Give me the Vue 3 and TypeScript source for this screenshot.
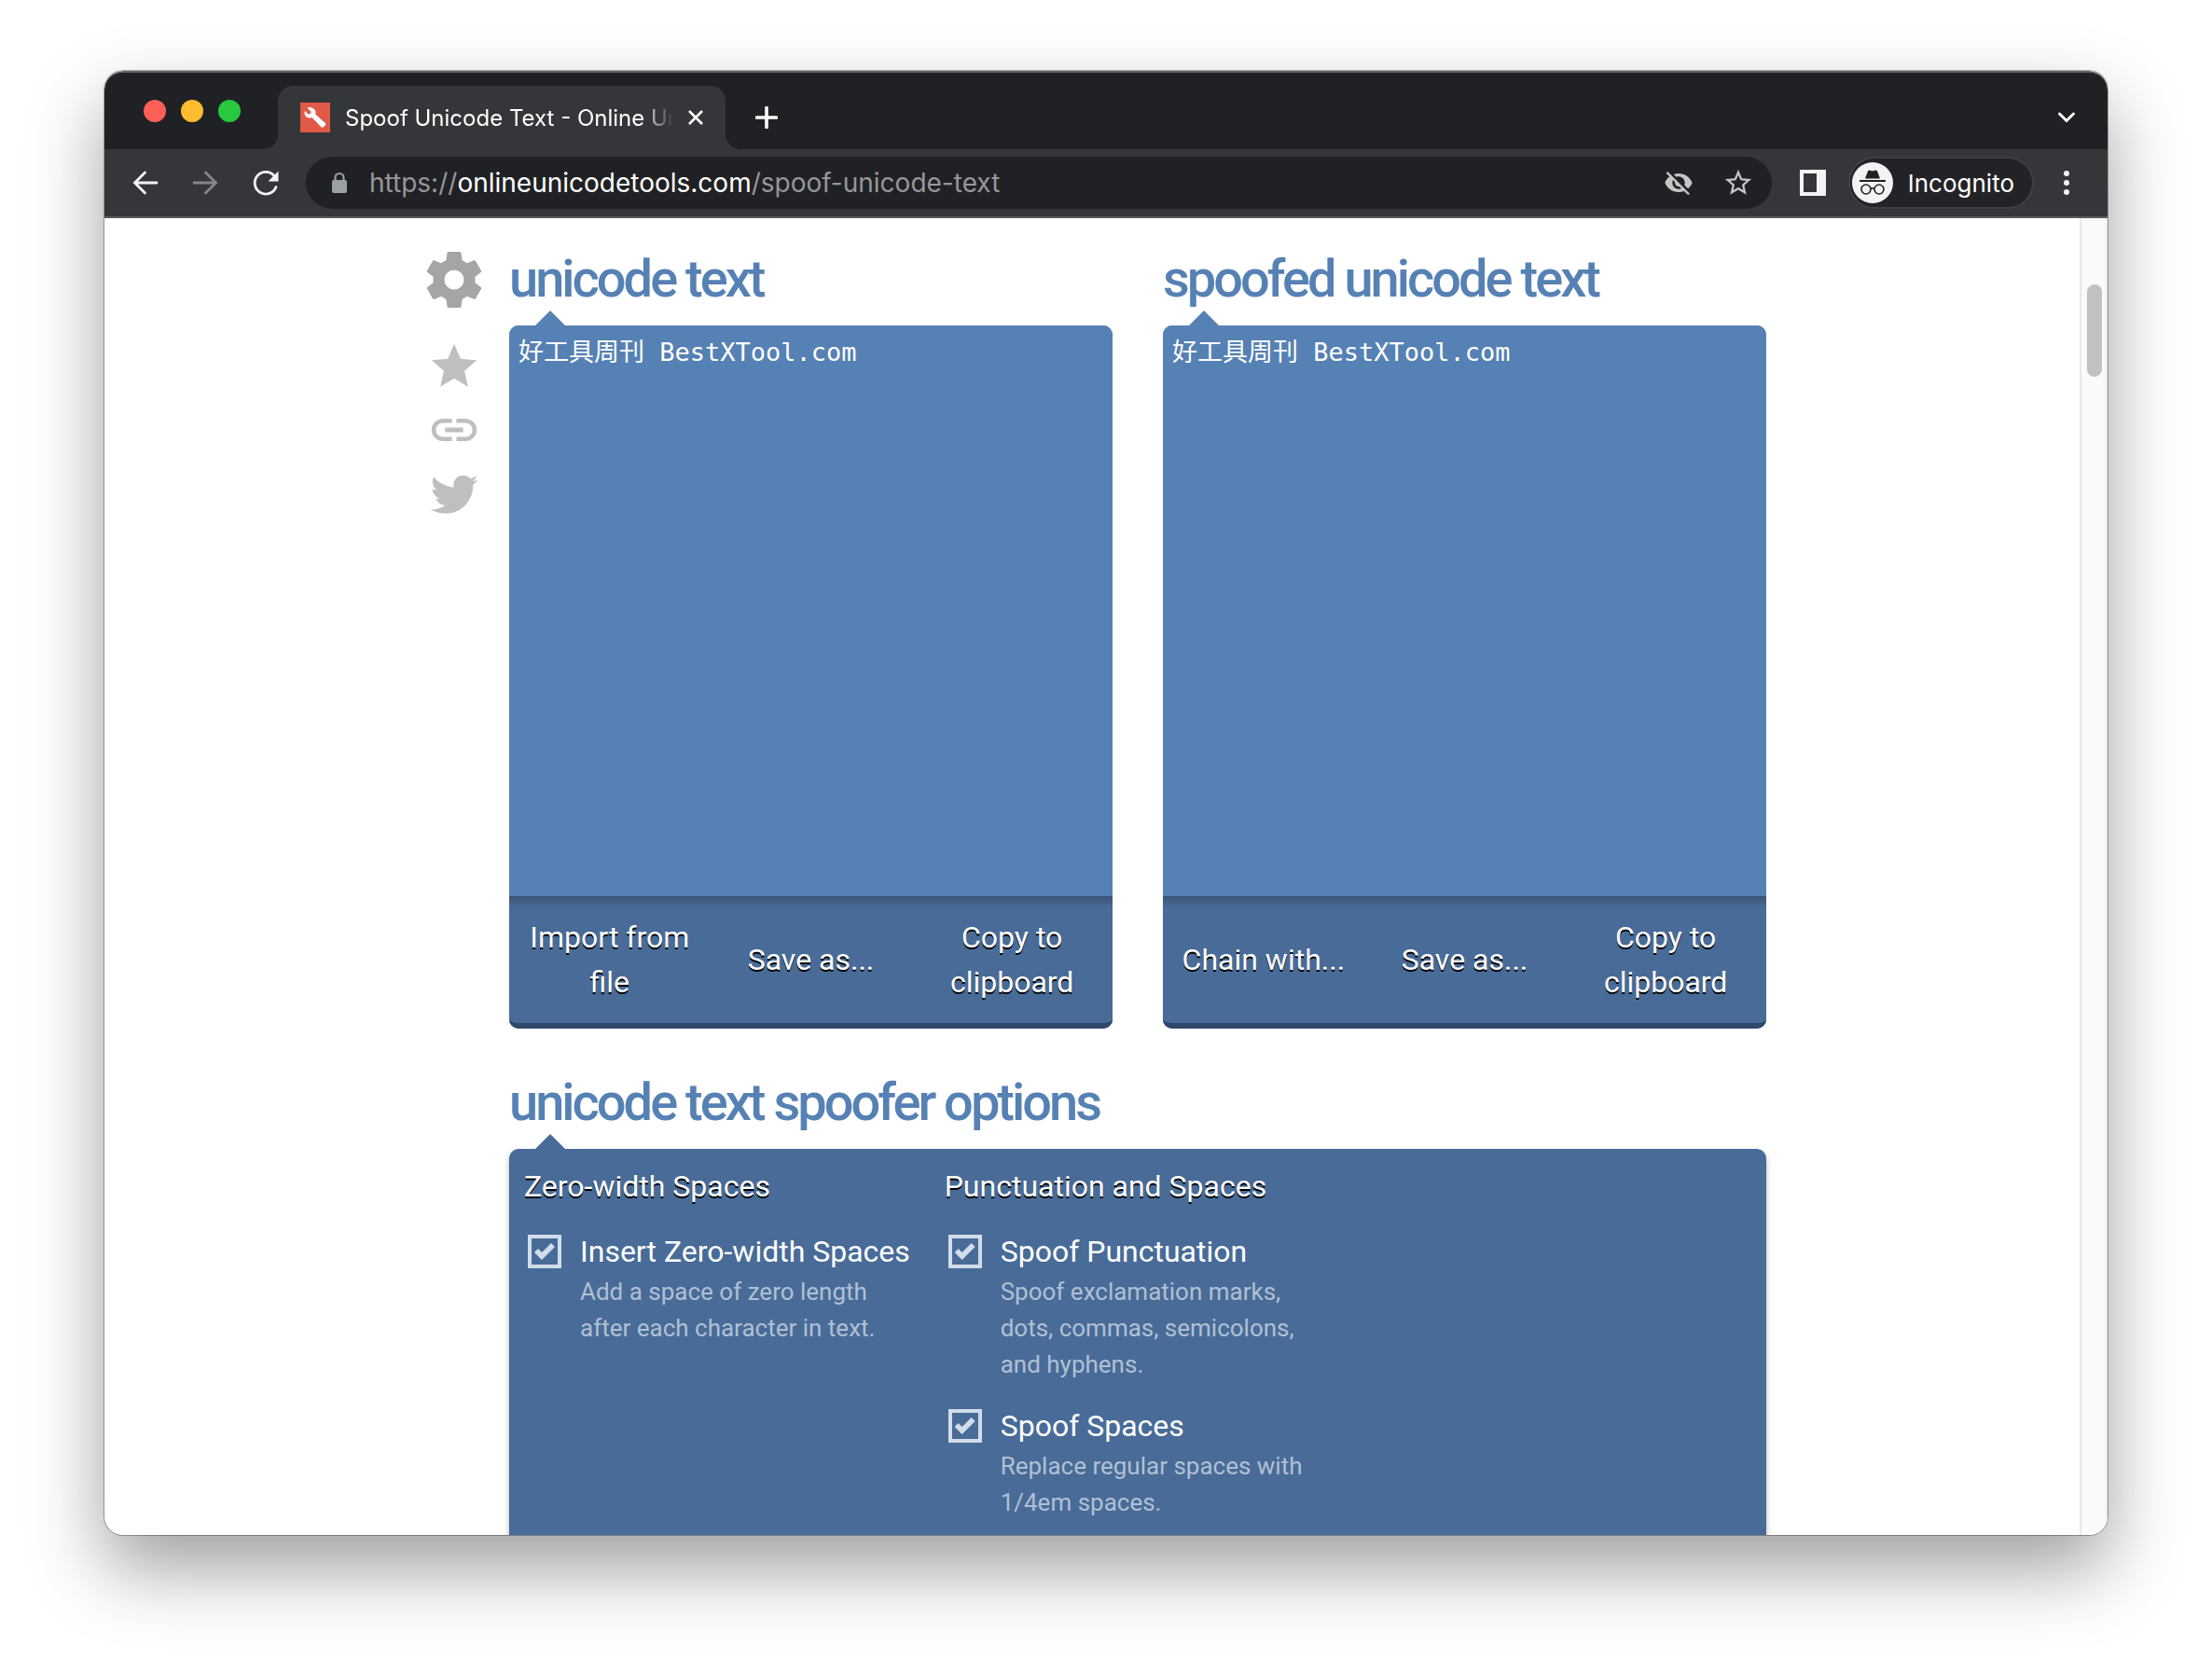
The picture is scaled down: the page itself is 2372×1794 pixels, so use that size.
<script setup lang="ts">
import { reactive, ref } from 'vue'

interface Option {
  id: string
  label: string
  hint: string
  checked: boolean
}
interface OptionGroup {
  title: string
  options: Option[]
}
interface ToolPanel {
  id: string
  title: string
  text: string
  actions: string[]
}

const panels = reactive<ToolPanel[]>([
  {
    id: 'input',
    title: 'unicode text',
    text: '好工具周刊 BestXTool.com',
    actions: ['Import from file', 'Save as...', 'Copy to clipboard'],
  },
  {
    id: 'output',
    title: 'spoofed unicode text',
    text: '好工具周刊 BestXTool.com',
    actions: ['Chain with...', 'Save as...', 'Copy to clipboard'],
  },
])

const groups = reactive<OptionGroup[]>([
  {
    title: 'Zero-width Spaces',
    options: [
      {
        id: 'zero-width',
        label: 'Insert Zero-width Spaces',
        hint: 'Add a space of zero length after each character in text.',
        checked: true,
      },
    ],
  },
  {
    title: 'Punctuation and Spaces',
    options: [
      {
        id: 'punctuation',
        label: 'Spoof Punctuation',
        hint: 'Spoof exclamation marks, dots, commas, semicolons, and hyphens.',
        checked: true,
      },
      {
        id: 'spaces',
        label: 'Spoof Spaces',
        hint: 'Replace regular spaces with 1/4em spaces.',
        checked: true,
      },
    ],
  },
])

const shareIcons = [
  {
    name: 'Favorite',
    d: 'M12,17.27L18.18,21L16.54,13.97L22,9.24L14.81,8.62L12,2L9.19,8.62L2,9.24L7.45,13.97L5.82,21L12,17.27Z',
  },
  {
    name: 'Copy link',
    d: 'M3.9,12C3.9,10.29 5.29,8.9 7,8.9H11V7H7A5,5 0 0,0 2,12A5,5 0 0,0 7,17H11V15.1H7C5.29,15.1 3.9,13.71 3.9,12M8,13H16V11H8V13M17,7H13V8.9H17C18.71,8.9 20.1,10.29 20.1,12C20.1,13.71 18.71,15.1 17,15.1H13V17H17A5,5 0 0,0 22,12A5,5 0 0,0 17,7Z',
  },
  {
    name: 'Share on Twitter',
    d: 'M22.46,6C21.69,6.35 20.86,6.58 20,6.69C20.88,6.16 21.56,5.32 21.88,4.31C21.05,4.81 20.13,5.16 19.16,5.36C18.37,4.5 17.26,4 16,4C13.65,4 11.73,5.92 11.73,8.29C11.73,8.63 11.77,8.96 11.84,9.27C8.28,9.09 5.11,7.38 3,4.79C2.63,5.42 2.42,6.16 2.42,6.94C2.42,8.43 3.17,9.75 4.33,10.5C3.62,10.5 2.96,10.3 2.38,10C2.38,10 2.38,10 2.38,10.03C2.38,12.11 3.86,13.85 5.82,14.24C5.46,14.34 5.08,14.39 4.69,14.39C4.42,14.39 4.15,14.36 3.89,14.31C4.43,16 6,17.26 7.89,17.29C6.43,18.45 4.58,19.13 2.56,19.13C2.22,19.13 1.88,19.11 1.54,19.07C3.44,20.29 5.7,21 8.12,21C16,21 20.33,14.46 20.33,8.79C20.33,8.6 20.33,8.42 20.32,8.23C21.16,7.63 21.88,6.87 22.46,6Z',
  },
]

const tabTitle = ref('Spoof Unicode Text - Online Unicode Tools')
</script>

<template>
  <div class="desktop">
    <div class="window">
      <header class="tab-strip">
        <div class="lights">
          <button class="light red" aria-label="Close window"></button>
          <button class="light amber" aria-label="Minimize window"></button>
          <button class="light green" aria-label="Zoom window"></button>
        </div>
        <div class="tab">
          <svg class="favicon" viewBox="0 0 32 32" aria-hidden="true">
            <rect width="32" height="32" fill="#e05a47" />
            <path d="M12 5.500C9.500 4.600 8 5.200 7.600 5.700L12 10.200L9.200 13L4.900 8.900C3.600 12 5.600 16 9.500 16.400C11 16.600 12 16.200 12.600 15.900L22.400 26.300C24 27.900 28.600 23.800 26.900 22L16.200 12.600C17.400 9.700 15.600 6.500 12 5.500Z" fill="#fff" />
          </svg>
          <span class="tab-title">{{ tabTitle }}</span>
          <button class="tab-close" aria-label="Close tab">
            <svg viewBox="0 0 16 16" width="16" height="16"><path d="M1 1L15 15M15 1L1 15" stroke="#fff" stroke-width="2.600" /></svg>
          </button>
        </div>
        <button class="new-tab" aria-label="New tab">
          <svg viewBox="0 0 24 24" width="24" height="24"><path d="M12 1.500V22.500M1.500 12H22.500" stroke="#fff" stroke-width="3.600" stroke-linecap="round" /></svg>
        </button>
        <button class="tab-search" aria-label="Search tabs">
          <svg viewBox="0 0 20 14" width="20" height="14"><path d="M2.500 3L10 10.500L17.500 3" fill="none" stroke="#fff" stroke-width="3" stroke-linecap="round" /></svg>
        </button>
      </header>

      <nav class="toolbar">
        <button class="nav-button" aria-label="Back">
          <svg viewBox="0 0 32 32" width="32" height="32"><path d="M28 16H5M15.500 5L4.500 16L15.500 27" fill="none" stroke="#f1f3f4" stroke-width="2.800" stroke-linecap="round" /></svg>
        </button>
        <button class="nav-button" aria-label="Forward">
          <svg viewBox="0 0 32 32" width="32" height="32"><path d="M4 16H27M16.500 5L27.500 16L16.500 27" fill="none" stroke="#868789" stroke-width="2.800" stroke-linecap="round" /></svg>
        </button>
        <button class="nav-button" aria-label="Reload">
          <svg viewBox="-1 0 32 32" width="32" height="32"><path d="M27 20.500A11.800 11.800 0 1 1 24.500 8" fill="none" stroke="#f1f3f4" stroke-width="2.800" stroke-linecap="round" /><path d="M29.500 3.500V14.500H18.500Z" fill="#f1f3f4" /></svg>
        </button>
        <div class="address">
          <svg class="lock" viewBox="0 0 18 24" width="18" height="24"><path d="M4.500 10V6.500a4.500 4.500 0 0 1 9 0V10" fill="none" stroke="#9aa0a6" stroke-width="2.200" /><rect x="1" y="9" width="16" height="14" rx="2" fill="#9aa0a6" /></svg>
          <div class="url" role="textbox" aria-label="Address" contenteditable="true">https://<span class="host">onlineunicodetools.com</span>/spoof-unicode-text</div>
          <button class="address-button" aria-label="Third-party cookies blocked">
            <svg viewBox="0 0 24 24" width="32" height="32"><path fill="#c4c5c7" d="M12 7c2.760 0 5 2.240 5 5 0 .650-.130 1.260-.360 1.830l2.920 2.920c1.510-1.260 2.700-2.890 3.430-4.750-1.730-4.390-6-7.500-11-7.500-1.400 0-2.740.250-3.980.700l2.160 2.160C10.740 7.130 11.350 7 12 7zM2 4.270l2.280 2.280.460.460C3.080 8.300 1.780 10.020 1 12c1.730 4.390 6 7.500 11 7.500 1.550 0 3.030-.300 4.380-.840l.420.420L19.730 22 21 20.730 3.270 3 2 4.270zM7.530 9.800l1.550 1.550c-.050.210-.080.430-.080.650 0 1.660 1.340 3 3 3 .220 0 .440-.030.650-.080l1.550 1.550c-.670.330-1.410.530-2.200.530-2.760 0-5-2.240-5-5 0-.790.200-1.530.530-2.200z" /></svg>
          </button>
          <button class="address-button" aria-label="Bookmark this tab">
            <svg viewBox="0 0 24 24" width="34" height="34"><path fill="#c4c5c7" d="M22 9.240l-7.190-.620L12 2 9.190 8.630 2 9.240l5.460 4.730L5.820 21 12 17.270 18.180 21l-1.630-7.030L22 9.240zM12 15.400l-3.760 2.270 1-4.280-3.320-2.880 4.380-.380L12 6.100l1.710 4.040 4.380.380-3.320 2.880 1 4.280L12 15.400z" /></svg>
          </button>
        </div>
        <button class="side-panel" aria-label="Side panel">
          <svg viewBox="0 0 28 28" width="28" height="28"><path fill="#f1f3f4" fill-rule="evenodd" d="M0 0H28V28H0ZM4 4V24H18V4Z" /></svg>
        </button>
        <button class="incognito">
          <svg viewBox="0 0 44 44" width="44" height="44" aria-hidden="true">
            <circle cx="22" cy="22" r="22" fill="#f1f3f4" />
            <path d="M14 17.500L17 9.500C17.400 8.500 18.500 8.300 19.500 8.800C21 9.500 23 9.500 24.500 8.800C25.500 8.300 26.600 8.500 27 9.500L30 17.500Z" fill="#202124" />
            <path d="M8 20H36" stroke="#202124" stroke-width="2" />
            <g fill="none" stroke="#202124" stroke-width="1.600"><circle cx="15" cy="29" r="5" /><circle cx="29" cy="29" r="5" /><path d="M20 28.500Q22 27 24 28.500" /></g>
          </svg>
          <span>Incognito</span>
        </button>
        <button class="menu" aria-label="Menu">
          <svg viewBox="0 0 8 28" width="8" height="28" fill="#f1f3f4"><circle cx="4" cy="4" r="3" /><circle cx="4" cy="14" r="3" /><circle cx="4" cy="24" r="3" /></svg>
        </button>
      </nav>

      <div class="viewport">
        <main class="page">
          <aside class="side-icons">
            <button class="icon-button gear" aria-label="Settings">
              <svg viewBox="0 0 24 24" width="72" height="72"><path fill="currentColor" d="M12,15.5A3.5,3.5 0 0,1 8.5,12A3.5,3.5 0 0,1 12,8.500A3.5,3.5 0 0,1 15.5,12A3.5,3.5 0 0,1 12,15.5M19.430,12.970C19.470,12.650 19.500,12.330 19.500,12C19.500,11.670 19.470,11.340 19.430,11L21.540,9.370C21.730,9.220 21.780,8.950 21.660,8.730L19.660,5.270C19.540,5.050 19.270,4.960 19.050,5.050L16.560,6.050C16.040,5.660 15.500,5.320 14.870,5.070L14.500,2.420C14.460,2.180 14.250,2 14,2H10C9.750,2 9.540,2.180 9.500,2.420L9.130,5.070C8.500,5.320 7.960,5.660 7.440,6.050L4.950,5.050C4.730,4.960 4.460,5.050 4.340,5.270L2.340,8.730C2.210,8.950 2.270,9.220 2.460,9.370L4.570,11C4.530,11.340 4.500,11.670 4.500,12C4.500,12.330 4.530,12.650 4.570,12.970L2.460,14.630C2.270,14.780 2.210,15.050 2.340,15.270L4.340,18.730C4.460,18.950 4.730,19.030 4.950,18.950L7.440,17.940C7.960,18.340 8.500,18.680 9.130,18.930L9.500,21.580C9.540,21.820 9.750,22 10,22H14C14.250,22 14.460,21.820 14.500,21.580L14.870,18.930C15.500,18.670 16.040,18.340 16.560,17.940L19.050,18.950C19.270,19.030 19.540,18.950 19.660,18.730L21.660,15.270C21.780,15.050 21.730,14.780 21.540,14.630L19.430,12.970Z" /></svg>
            </button>
            <button v-for="icon in shareIcons" :key="icon.name" class="icon-button" :aria-label="icon.name">
              <svg viewBox="0 0 24 24" width="58" height="58"><path fill="currentColor" :d="icon.d" /></svg>
            </button>
          </aside>

          <div class="tool">
            <div class="panels">
              <section v-for="panel in panels" :key="panel.id" class="panel">
                <h2><label :for="panel.id">{{ panel.title }}</label></h2>
                <div class="bubble light-bubble">
                  <textarea :id="panel.id" v-model="panel.text" spellcheck="false"></textarea>
                  <div class="actions">
                    <button v-for="action in panel.actions" :key="action">{{ action }}</button>
                  </div>
                </div>
              </section>
            </div>

            <section class="options">
              <h2>unicode text spoofer options</h2>
              <div class="bubble option-grid">
                <div v-for="group in groups" :key="group.title" class="group">
                  <h3>{{ group.title }}</h3>
                  <div v-for="option in group.options" :key="option.id" class="option">
                    <input :id="option.id" v-model="option.checked" type="checkbox" />
                    <div class="option-text">
                      <label :for="option.id">{{ option.label }}</label>
                      <p>{{ option.hint }}</p>
                    </div>
                  </div>
                </div>
              </div>
            </section>
          </div>
        </main>
        <div class="scrollbar"><div class="thumb"></div></div>
      </div>
    </div>
  </div>
</template>

<style>
body {
  margin: 0;
  background: #fff;
}
</style>

<style scoped>
* {
  box-sizing: border-box;
}
button {
  display: flex;
  align-items: center;
  justify-content: center;
  flex: none;
  margin: 0;
  padding: 0;
  border: 0;
  background: none;
  color: inherit;
  font: inherit;
}
svg {
  display: block;
  flex: none;
}
.desktop {
  display: flex;
  flex-direction: column;
  min-height: 100vh;
  padding: 76px 112px 148px;
  font-family: Roboto, "Noto Sans CJK SC", sans-serif;
}
.window {
  flex: 1;
  display: flex;
  flex-direction: column;
  overflow: hidden;
  border-radius: 20px;
  background: #fff;
  box-shadow: 0 0 0 1px rgba(0, 0, 0, 0.3), 0 36px 80px rgba(0, 0, 0, 0.38);
}

/* Browser chrome */
.tab-strip {
  display: flex;
  align-items: flex-end;
  height: 84px;
  padding: 0 34px 0 42px;
  border-top: 2px solid #636467;
  border-radius: 20px 20px 0 0;
  background: #202124;
  color: #fff;
  font-family: Inter, "Liberation Sans", sans-serif;
  font-size: 24px;
}
.lights {
  display: flex;
  align-items: center;
  gap: 16px;
  height: 82px;
  margin-right: 40px;
}
.light {
  width: 24px;
  height: 24px;
  border-radius: 50%;
}
.red {
  background: #ff5f57;
}
.amber {
  background: #febc2e;
}
.green {
  background: #28c840;
}
.tab {
  position: relative;
  display: flex;
  align-items: center;
  width: 480px;
  height: 68px;
  padding: 0 24px;
  border-radius: 16px 16px 0 0;
  background: #35363a;
}
.tab::before,
.tab::after {
  content: "";
  position: absolute;
  bottom: 0;
  width: 16px;
  height: 16px;
}
.tab::before {
  right: 100%;
  background: radial-gradient(circle at 0 0, transparent 16px, #35363a 16px);
}
.tab::after {
  left: 100%;
  background: radial-gradient(circle at 100% 0, transparent 16px, #35363a 16px);
}
.favicon {
  width: 32px;
  height: 32px;
}
.tab-title {
  flex: 1;
  margin: 0 16px;
  overflow: hidden;
  white-space: nowrap;
  mask-image: linear-gradient(to right, #000 90%, transparent);
}
.new-tab {
  height: 68px;
  margin-left: 32px;
}
.tab-search {
  height: 68px;
  margin-left: auto;
}
.toolbar {
  display: flex;
  align-items: center;
  height: 74px;
  padding: 0 40px 0 28px;
  border-bottom: 2px solid #5b5c60;
  background: #35363a;
  color: #fff;
  font-family: Inter, "Liberation Sans", sans-serif;
  font-size: 26px;
}
.nav-button {
  width: 32px;
  margin-right: 32px;
}
.nav-button:nth-child(3) {
  margin-right: 28px;
}
.address {
  flex: 1;
  display: flex;
  align-items: center;
  height: 56px;
  padding: 0 19px 0 27px;
  border-radius: 28px;
  background: #202124;
}
.url {
  flex: 1;
  margin-left: 23px;
  overflow: hidden;
  white-space: nowrap;
  color: #96979a;
  font-size: 28px;
}
.host {
  color: #fff;
}
.address-button {
  width: 34px;
  margin-left: 30px;
}
.side-panel {
  margin-left: 30px;
}
.incognito {
  gap: 16px;
  height: 56px;
  margin: 0 31px 0 24px;
  padding: 0 19px 0 2px;
  border: 2px solid #3f4044;
  border-radius: 28px;
  background: #232327;
}

/* Page */
.viewport {
  flex: 1;
  display: flex;
}
.page {
  flex: 1;
  display: flex;
  width: 100%;
  max-width: 1446px;
  margin: 0 auto;
}
.side-icons {
  display: flex;
  flex-direction: column;
  align-items: center;
  gap: 10px;
  flex: none;
  width: 98px;
  padding: 30px 20px 0 0;
  color: #bfbfbf;
}
.gear {
  margin-bottom: 18px;
  color: #a5a5a5;
}
.tool {
  flex: 1;
  display: flex;
  flex-direction: column;
  gap: 42px;
  padding-top: 28px;
}
.panels {
  display: grid;
  grid-template-columns: 1fr 1fr;
  gap: 54px;
}
h2 {
  height: 87px;
  margin: 0;
  color: #5681b4;
  font-size: 56px;
  font-weight: 500;
  line-height: 74px;
  letter-spacing: -3px;
}
.bubble {
  position: relative;
  border-radius: 10px;
  background: #486b98;
  color: #fff;
}
.bubble::before {
  content: "";
  position: absolute;
  bottom: 100%;
  left: 28px;
  width: 32px;
  height: 16px;
  background: #486b98;
  clip-path: polygon(50% 0, 100% 100%, 0 100%);
}
.light-bubble::before {
  background: #5681b4;
}
textarea {
  display: block;
  width: 100%;
  height: 612px;
  margin: 0;
  padding: 13px 10px;
  border: 0;
  border-radius: 10px 10px 0 0;
  outline: 0;
  background: #5681b4;
  color: #fff;
  resize: none;
  font-family: "DejaVu Sans Mono", "Noto Sans CJK SC", monospace;
  font-size: 27px;
  line-height: 32px;
}
.actions {
  display: grid;
  grid-template-columns: repeat(3, 1fr);
  height: 142px;
  border-bottom: 6px solid #2e4867;
  border-radius: 0 0 10px 10px;
  background: linear-gradient(#3b5475, #486b98 12px);
}
.actions button {
  padding: 0 16px;
  font-size: 32px;
  line-height: 48px;
  text-shadow: 0 2px 0 #000;
}
.options {
  flex: 1;
  display: flex;
  flex-direction: column;
}
.option-grid {
  flex: 1;
  display: grid;
  grid-template-columns: repeat(3, 1fr);
  gap: 36px;
  padding: 16px 16px 8px;
  border-radius: 10px 10px 0 0;
  box-shadow: 0 4px 6px rgba(0, 0, 0, 0.3);
}
h3 {
  margin: 0 0 22px;
  font-size: 32px;
  font-weight: 400;
  line-height: 48px;
  text-shadow: 0 2px 0 #000;
}
.option {
  display: flex;
  gap: 20px;
  margin-bottom: 22px;
  padding-left: 4px;
}
.option:last-child {
  margin-bottom: 0;
}
.option label {
  display: block;
  font-size: 32px;
  line-height: 48px;
}
.option p {
  max-width: 340px;
  margin: 0;
  color: #b0c0d4;
  font-size: 26px;
  line-height: 39px;
}
input[type="checkbox"] {
  appearance: none;
  flex: none;
  width: 36px;
  height: 36px;
  margin: 6px 0 0;
  border: 4px solid #d3dcea;
}
input[type="checkbox"]:checked::before {
  content: "";
  display: block;
  width: 28px;
  height: 28px;
  background: #d3dcea;
  clip-path: polygon(3px 15px, 7px 11px, 11px 15px, 21px 5px, 25px 9px, 11px 23px);
}
.scrollbar {
  flex: none;
  width: 30px;
  padding: 71px 4px 0 6px;
  border-left: 2px solid #e8e8e8;
  border-right: 2px solid #ededed;
  background: #fafafa;
}
.thumb {
  width: 16px;
  height: 99px;
  border-radius: 8px;
  background: #c1c1c1;
}
</style>
